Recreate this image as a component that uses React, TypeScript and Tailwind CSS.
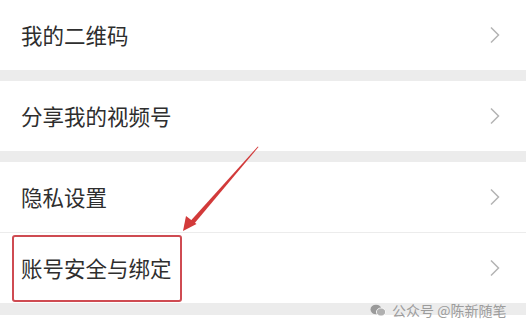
import React from "react";

const Chevron = () => (
  <svg width="12" height="18" viewBox="0 0 12 18" className="shrink-0">
    <path d="M2 1.5 L9.5 9 L2 16.5" fill="none" stroke="#b4b4b4" strokeWidth="1.5" />
  </svg>
);

const Row = ({ label, boxed }: { label: string; boxed?: boolean }) => (
  <div className="relative h-[70px] bg-white flex items-center justify-between pl-[21px] pr-[25px]">
    <span className="text-[21.5px] text-[#2e2e2e] leading-none">{label}</span>
    <Chevron />
    {boxed && (
      <div className="absolute left-[12px] top-[2px] w-[170px] h-[67px] border-2 border-[#cf4b52] rounded-[3px]" />
    )}
  </div>
);

const Band = () => <div className="h-[11px] bg-[#ececec]" />;

export default function App() {
  return (
    <div
      className="relative w-[526px] h-[335px] overflow-hidden bg-white"
      style={{ fontFamily: '"Noto Sans CJK SC", "Noto Sans", sans-serif' }}
    >
      <Row label="我的二维码" />
      <Band />
      <Row label="分享我的视频号" />
      <Band />
      <Row label="隐私设置" />
      <div className="h-px bg-[#ececec]" />
      <Row label="账号安全与绑定" boxed />
      <div className="relative h-[12px] bg-[#ececec]" />
      <div className="h-[20px] bg-white" />

      <div className="absolute left-[370px] top-[303px] flex items-center gap-[6px] text-[14px] text-[#9c9c9c] leading-none">
        <svg width="16" height="13" viewBox="0 0 16 13">
          <ellipse cx="6" cy="5.5" rx="5.5" ry="4.8" fill="#9a9a9a" />
          <ellipse cx="11" cy="8" rx="4.6" ry="4" fill="#b0b0b0" stroke="#fff" strokeWidth="0.8" />
        </svg>
        <span>公众号 @陈新随笔</span>
      </div>

      <svg className="absolute left-0 top-0 pointer-events-none" width="526" height="335">
        <polygon points="258.5,147 257.8,146.5 190,221.5 193.5,224.5" fill="#d23a3a" />
        <polygon points="183,231 186,216 196.5,224" fill="#d23a3a" />
      </svg>
    </div>
  );
}
